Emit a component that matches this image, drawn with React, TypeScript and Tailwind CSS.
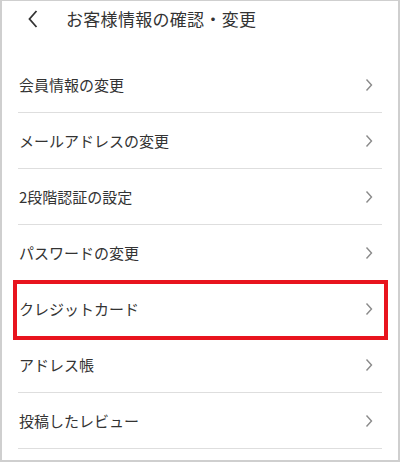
const items = [
  '会員情報の変更',
  'メールアドレスの変更',
  '2段階認証の設定',
  'パスワードの変更',
  'クレジットカード',
  'アドレス帳',
  '投稿したレビュー',
];

function ChevronRight() {
  return (
    <svg width="8" height="14" viewBox="0 0 8 14" className="shrink-0">
      <polyline points="1.5,1.5 6.5,7 1.5,12.5" fill="none" stroke="#8a8a8a" strokeWidth="1.4" />
    </svg>
  );
}

export default function App() {
  return (
    <div
      className="w-[400px] h-[462px] bg-white border-2 border-t border-[#cfcfcf] overflow-hidden text-[#333]"
      style={{ fontFamily: '"Noto Sans CJK JP", "Noto Sans", sans-serif' }}
    >
      {/* Header */}
      <div className="h-[56px] flex items-start pt-[6px]">
        <div className="w-[64px] h-[24px] flex items-center pl-[26px]">
          <svg width="10" height="18" viewBox="0 0 10 18">
            <polyline points="8.5,1 1.5,9 8.5,17" fill="none" stroke="#333" strokeWidth="1.8" />
          </svg>
        </div>
        <span className="text-[17px] leading-[24px] tracking-[0.3px]">お客様情報の確認・変更</span>
      </div>

      {/* List */}
      <div className="mx-[16px]">
        {items.map((label, i) => (
          <div
            key={label}
            className="relative h-[56px] flex items-center justify-between border-b border-[#dedede] pl-[1px] pr-[9px]"
          >
            <span className="text-[15px] leading-none">{label}</span>
            <ChevronRight />
            {i === 4 && (
              <div className="absolute top-[-1px] bottom-[-4px] left-[-5px] right-[-6px] border-4 border-[#e8141e]" />
            )}
          </div>
        ))}
      </div>
    </div>
  );
}
